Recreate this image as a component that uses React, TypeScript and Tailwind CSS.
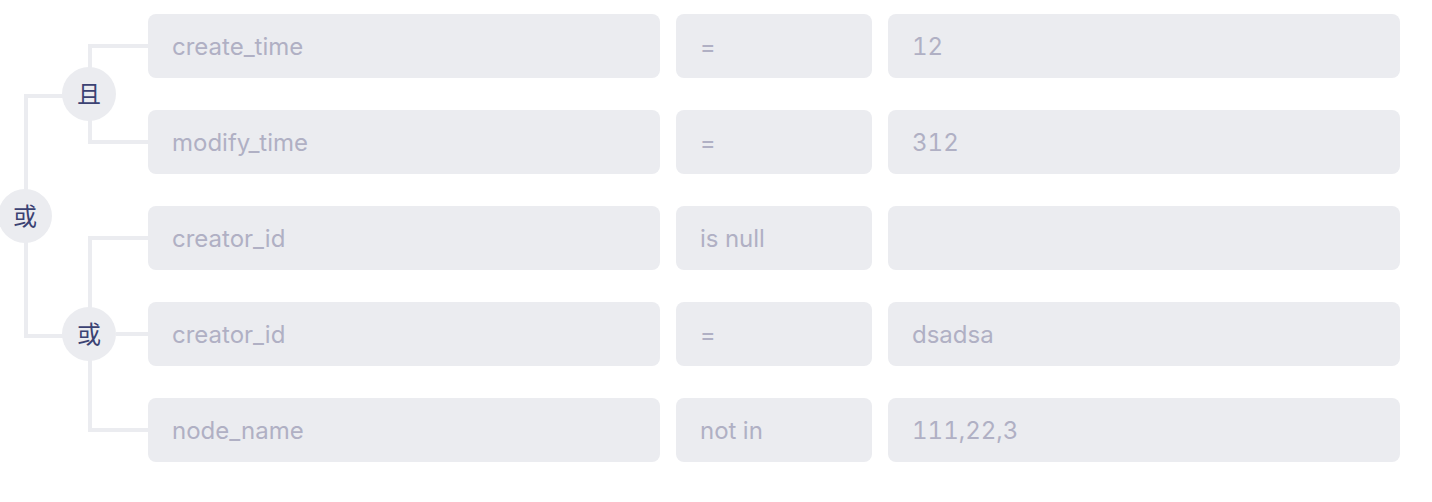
import React from "react";

type Rule = { field: string; operator: string; value: string };
type Group = { logic: string; rules: Rule[] };

const groups: Group[] = [
  {
    logic: "且",
    rules: [
      { field: "create_time", operator: "=", value: "12" },
      { field: "modify_time", operator: "=", value: "312" },
    ],
  },
  {
    logic: "或",
    rules: [
      { field: "creator_id", operator: "is null", value: "" },
      { field: "creator_id", operator: "=", value: "dsadsa" },
      { field: "node_name", operator: "not in", value: "111,22,3" },
    ],
  },
];

function LogicButton({ children }: { children: string }) {
  return (
    <button
      type="button"
      className="-ml-[30px] flex size-[54px] shrink-0 items-center justify-center rounded-full bg-[#ebecf0] pb-0.5 font-['Noto_Sans_CJK_SC',sans-serif] text-2xl leading-none text-[#3b4273]"
    >
      {children}
    </button>
  );
}

function Field({ label, value }: { label: string; value: string }) {
  return (
    <input
      readOnly
      aria-label={label}
      value={value}
      className="h-16 w-full min-w-0 rounded-lg bg-[#ebecf0] px-6 text-2xl tabular-nums text-[#b0b0c4] outline-none"
    />
  );
}

function RuleGroup({ group }: { group: Group }) {
  return (
    <div className="flex">
      <div className="my-[30px] flex w-[60px] shrink-0 items-center border-y-4 border-l-4 border-[#ebecf0]">
        <LogicButton>{group.logic}</LogicButton>
        {group.rules.length % 2 === 1 && <span className="h-1 flex-1 bg-[#ebecf0]" />}
      </div>
      <div className="flex min-w-0 flex-1 flex-col gap-8">
        {group.rules.map((rule, i) => (
          <div key={i} className="grid grid-cols-[512fr_196fr_512fr] gap-4">
            <Field label="field" value={rule.field} />
            <Field label="operator" value={rule.operator} />
            <Field label="value" value={rule.value} />
          </div>
        ))}
      </div>
    </div>
  );
}

export default function App() {
  return (
    <main className="flex overflow-hidden bg-white pt-3.5 pr-8 pb-10 pl-6 font-['Inter',sans-serif]">
      <div className="mt-20 mb-[124px] flex w-16 shrink-0 items-center border-y-4 border-l-4 border-[#ebecf0]">
        <LogicButton>或</LogicButton>
      </div>
      <div className="flex min-w-0 flex-1 flex-col gap-8">
        {groups.map((group, i) => (
          <RuleGroup key={i} group={group} />
        ))}
      </div>
    </main>
  );
}
